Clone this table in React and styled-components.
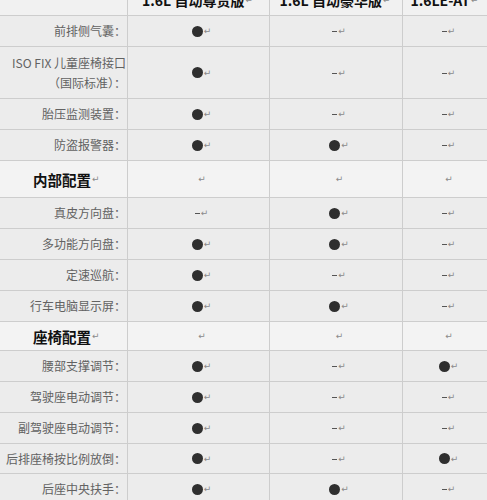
import React from "react";
import styled, { createGlobalStyle } from "styled-components";

const GlobalStyle = createGlobalStyle`
  html, body {
    margin: 0;
    padding: 0;
    background: #ececec;
    overflow: hidden;
  }
`;

const Page = styled.div`
  width: 487px;
  height: 500px;
  overflow: hidden;
  font-family: "Noto Sans CJK SC", "Noto Sans", sans-serif;
`;

const Table = styled.div`
  display: flex;
  flex-direction: column;
  gap: 1px;
  width: 488px;
  margin-top: -15px;
  background: #cdcdcd;
`;

const Row = styled.div`
  display: grid;
  grid-template-columns: 127px 141px 132px 1fr;
  gap: 1px;
  height: ${(p) => p.$h || 30}px;
`;

const Cell = styled.div`
  display: flex;
  align-items: center;
  background: ${(p) => (p.$light ? "#f3f3f3" : "#ececec")};
`;

const HeadCell = styled(Cell)`
  justify-content: center;
  padding-right: 2px;
  font-size: 14px;
  font-weight: 700;
  color: #111;
  white-space: nowrap;
  background: #f1f1f1;
`;

const LabelCell = styled(Cell)`
  justify-content: flex-end;
  padding-right: 1px;
  font-size: 12px;
  line-height: 20px;
  color: #626262;
  text-align: right;
  white-space: nowrap;
`;

const SectionCell = styled(Cell)`
  padding-left: 33px;
  font-size: 14.5px;
  font-weight: 700;
  color: #111;
`;

const ValueCell = styled(Cell)`
  justify-content: center;
  padding-left: 6px;
`;

const Dot = styled.span`
  display: inline-block;
  width: 11px;
  height: 11px;
  border-radius: 50%;
  background: #2f2f2f;
`;

const Mark = styled.span`
  font-family: "DejaVu Sans", sans-serif;
  font-size: 9px;
  font-weight: 400;
  color: #8a8a8a;
  margin-left: 1px;
`;

const Dash = styled.span`
  display: inline-block;
  width: 5px;
  height: 1px;
  background: #555;
  margin-top: 1px;
`;

const Value = ({ on, empty, light }) => (
  <ValueCell $light={light}>
    {on ? <Dot /> : empty ? null : <Dash />}
    <Mark>↵</Mark>
  </ValueCell>
);

const rows = [
  { type: "item", label: "前排侧气囊：", v: [1, 0, 0] },
  { type: "item", label: ["ISO FIX 儿童座椅接口", "（国际标准）："], v: [1, 0, 0], h: 51 },
  { type: "item", label: "胎压监测装置：", v: [1, 0, 0] },
  { type: "item", label: "防盗报警器：", v: [1, 1, 0] },
  { type: "section", label: "内部配置", h: 36 },
  { type: "item", label: "真皮方向盘：", v: [0, 1, 0] },
  { type: "item", label: "多功能方向盘：", v: [1, 1, 0] },
  { type: "item", label: "定速巡航：", v: [1, 0, 0] },
  { type: "item", label: "行车电脑显示屏：", v: [1, 1, 0] },
  { type: "section", label: "座椅配置", h: 28 },
  { type: "item", label: "腰部支撑调节：", v: [1, 0, 1] },
  { type: "item", label: "驾驶座电动调节：", v: [1, 0, 0] },
  { type: "item", label: "副驾驶座电动调节：", v: [1, 0, 0] },
  { type: "item", label: "后排座椅按比例放倒：", v: [1, 0, 1], h: 29 },
  { type: "item", label: "后座中央扶手：", v: [1, 1, 0] },
];

const models = ["1.6L 自动尊贵版", "1.6L 自动豪华版", "1.6LE-AT"];

export default function App() {
  return (
    <Page>
      <GlobalStyle />
      <Table>
        <Row>
          <HeadCell />
          {models.map((m) => (
            <HeadCell key={m}>
              {m}
              <Mark>↵</Mark>
            </HeadCell>
          ))}
        </Row>
        {rows.map((r, i) =>
          r.type === "section" ? (
            <Row key={i} $h={r.h}>
              <SectionCell $light>
                {r.label}
                <Mark>↵</Mark>
              </SectionCell>
              <Value empty light />
              <Value empty light />
              <Value empty light />
            </Row>
          ) : (
            <Row key={i} $h={r.h}>
              <LabelCell>
                {Array.isArray(r.label) ? (
                  <div>
                    {r.label.map((l) => (
                      <div key={l}>{l}</div>
                    ))}
                  </div>
                ) : (
                  r.label
                )}
              </LabelCell>
              {r.v.map((on, j) => (
                <Value key={j} on={on} />
              ))}
            </Row>
          )
        )}
      </Table>
    </Page>
  );
}
